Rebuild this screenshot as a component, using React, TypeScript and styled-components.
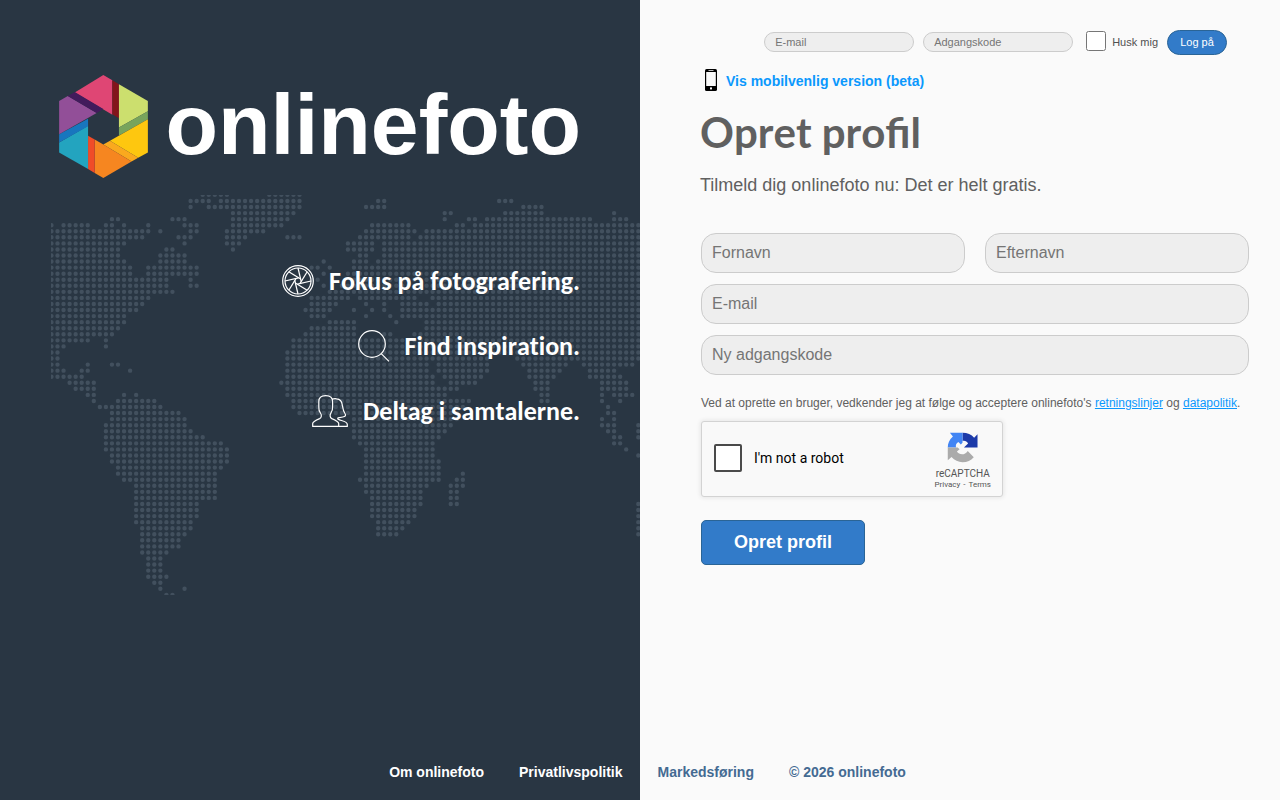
import React from "react";
import styled, { createGlobalStyle } from "styled-components";

const GlobalStyle = createGlobalStyle`
  *, *::before, *::after { box-sizing: border-box; }
  body {
    margin: 0;
    background: #fafafa;
    color: #606060;
    font-family: "Liberation Sans", Arial, sans-serif;
    font-size: 12px;
  }
`;

const Page = styled.div`
  display: flex;
  flex-direction: column;
  min-height: 100vh;
  background: linear-gradient(to right, #293643 50%, #fafafa 50%);
`;

const Columns = styled.main`
  display: grid;
  grid-template-columns: 1fr 1fr;
  flex: 1;
`;

const Intro = styled.section`
  position: relative;
  overflow: hidden;
  min-height: 600px;
  padding: 75px 60px 0 20px;
  display: flex;
  flex-direction: column;
  align-items: flex-end;
  color: #fff;
`;

const MapDrawing = styled.svg`
  position: absolute;
  top: 195px;
  right: 0;
  width: 589px;
  height: 400px;
`;

const Brand = styled.div`
  position: relative;
  display: flex;
  align-items: center;
  gap: 17px;
  height: 103px;
`;

const BrandName = styled.span`
  font-size: 86px;
  line-height: 100px;
  font-weight: 700;
  margin-right: -1px;
  padding-bottom: 6px;
`;

const Features = styled.ul`
  position: relative;
  list-style: none;
  margin: 87px 0 0;
  padding: 0;
  display: flex;
  flex-direction: column;
  align-items: flex-end;
  gap: 33px;
`;

const Feature = styled.li`
  display: flex;
  align-items: center;
  gap: 15px;
  height: 32px;
  font-family: Carlito, Lato, sans-serif;
  font-size: 26px;
  line-height: 32px;
  font-weight: 700;
  font-kerning: none;
  font-variant-ligatures: none;
  white-space: nowrap;
`;

const Signup = styled.section`
  padding: 30px 30px 0 60px;
`;

const LoginForm = styled.form`
  display: flex;
  align-items: center;
  justify-content: flex-end;
  height: 25px;
  padding-right: 23px;
  font-size: 11px;
`;

const LoginInput = styled.input`
  width: 150px;
  height: 20px;
  margin: 0 9px 2px 0;
  padding: 0 10px;
  border: 1px solid #ccc;
  border-radius: 10px;
  background: #eee;
  font: 11px "Liberation Sans", Arial, sans-serif;
  &::placeholder { color: #757575; opacity: 1; }
`;

const Remember = styled.label`
  display: flex;
  align-items: center;
  gap: 6px;
  margin: 0 9px 2px 4px;
  color: #505050;
`;

const RememberBox = styled.input`
  width: 20px;
  height: 20px;
  margin: 0 0 1px;
`;

const LoginButton = styled.button`
  width: 60px;
  height: 25px;
  padding: 0 0 2px;
  border: 1px solid #2a6496;
  border-radius: 13px;
  background: #327bc9;
  color: #fff;
  font: 11px "Liberation Sans", Arial, sans-serif;
`;

const MobileLink = styled.a`
  display: flex;
  align-items: center;
  width: fit-content;
  gap: 9px;
  margin: 14px 0 0 5px;
  color: #0b98fd;
  font-size: 14px;
  line-height: 22px;
  font-weight: 700;
  text-decoration: none;
  svg { margin-bottom: 2px; }
`;

const Title = styled.h1`
  margin: 12px 0 0;
  font-family: Lato, sans-serif;
  font-size: 42px;
  line-height: 54px;
  font-weight: 700;
  font-kerning: none;
`;

const Subtitle = styled.p`
  margin: 16px 0 0;
  font-size: 18px;
  line-height: 20px;
`;

const SignupForm = styled.form`
  display: grid;
  grid-template-columns: 1fr 1fr;
  gap: 11px 20px;
  margin: 38px 1px 0;
`;

const Field = styled.input<{ $wide?: boolean }>`
  grid-column: ${(p) => (p.$wide ? "1 / -1" : "auto")};
  min-width: 0;
  width: 100%;
  height: 40px;
  margin: 0;
  padding: 0 10px;
  border: 1px solid #ccc;
  border-radius: 15px;
  background: #eee;
  font: 16px "Liberation Sans", Arial, sans-serif;
  &::placeholder { color: #757575; opacity: 1; }
`;

const Terms = styled.p`
  grid-column: 1 / -1;
  margin: 10px -5px 0 0;
  line-height: 14px;
  a { color: #0b98fd; text-decoration: underline; }
`;

const Captcha = styled.div`
  grid-column: 1 / -1;
  display: flex;
  align-items: center;
  width: 302px;
  height: 76px;
  padding: 0 11px 0 12px;
  border: 1px solid #d3d3d3;
  border-radius: 3px;
  background: #f9f9f9;
  box-shadow: 0 0 4px 1px rgba(0, 0, 0, 0.08);
  font-family: Roboto, sans-serif;
`;

const CaptchaLabel = styled.label`
  display: flex;
  align-items: center;
  gap: 12px;
  flex: 1;
  padding-bottom: 2px;
  color: #000;
  font-size: 14px;
`;

const CaptchaBox = styled.input`
  appearance: none;
  width: 28px;
  height: 28px;
  margin: 0;
  border: 2px solid #4a4a4a;
  border-radius: 2px;
  background: #fff;
`;

const CaptchaBrand = styled.div`
  display: flex;
  flex-direction: column;
  align-items: center;
  padding-top: 3px;
  color: #555;
  font-size: 10px;
  line-height: 12px;
  svg { margin-bottom: 5px; }
`;

const CaptchaLinks = styled.span`
  display: flex;
  gap: 3px;
  font-size: 8px;
  line-height: 10px;
  a { color: #555; text-decoration: none; }
`;

const SubmitButton = styled.button`
  grid-column: 1 / -1;
  justify-self: start;
  width: 164px;
  height: 45px;
  margin-top: 12px;
  border: 1px solid #2a6496;
  border-radius: 5px;
  background: #327bc9;
  color: #fff;
  font: 700 18px "Liberation Sans", Arial, sans-serif;
`;

const Footer = styled.footer`
  display: flex;
  justify-content: center;
  gap: 35px;
  padding: 0 0 20px 15px;
  font-size: 14px;
  line-height: 16px;
  font-weight: 700;
`;

const FooterLink = styled.a<{ $light?: boolean }>`
  color: ${(p) => (p.$light ? "#fff" : "#446a92")};
  text-decoration: none;
`;

/* One line per latitude of the map; each pair is the first and last dotted column. */
const mapRows: number[][][] = [
  [[25, 29], [36, 41]],
  [[23, 26], [28, 41], [54, 55], [74, 76]],
  [[23, 23], [26, 41], [52, 55], [78, 81]],
  [[30, 40], [65, 66], [75, 81], [93, 93]],
  [[10, 11], [20, 22], [30, 39], [65, 65], [69, 70], [72, 89], [93, 95]],
  [[0, 0], [2, 6], [9, 10], [12, 12], [16, 16], [22, 24], [30, 38], [53, 59], [67, 68], [70, 97]],
  [[0, 16], [18, 18], [23, 24], [29, 35], [52, 60], [62, 97]],
  [[0, 15], [21, 23], [29, 32], [39, 41], [51, 59], [61, 97]],
  [[0, 12], [22, 22], [29, 31], [49, 53], [55, 97]],
  [[0, 11], [19, 20], [30, 30], [49, 53], [55, 97]],
  [[0, 11], [18, 22], [51, 52], [55, 97]],
  [[0, 12], [18, 22], [45, 45], [50, 52], [54, 97]],
  [[0, 13], [16, 24], [43, 44], [46, 46], [50, 97]],
  [[0, 13], [16, 24], [45, 45], [49, 97]],
  [[0, 19], [23, 23], [43, 44], [50, 97]],
  [[0, 19], [23, 24], [45, 45], [48, 97]],
  [[0, 20], [46, 97]],
  [[0, 16], [43, 49], [51, 60], [63, 97]],
  [[0, 15], [43, 47], [52, 52], [55, 55], [58, 62], [64, 97]],
  [[0, 14], [42, 46], [50, 50], [53, 53], [55, 55], [58, 97]],
  [[0, 12], [43, 45], [52, 52], [56, 56], [58, 97]],
  [[0, 12], [46, 50], [57, 57], [62, 97]],
  [[0, 11], [43, 50], [62, 97]],
  [[0, 10], [42, 50], [55, 56], [60, 97]],
  [[0, 6], [9, 9], [40, 97]],
  [[0, 2], [9, 9], [40, 97]],
  [[0, 1], [39, 97]],
  [[0, 1], [39, 72], [77, 97]],
  [[0, 1], [6, 6], [10, 11], [39, 62], [64, 72], [78, 85], [88, 96]],
  [[0, 2], [5, 6], [13, 13], [39, 62], [64, 72], [79, 84], [89, 93]],
  [[0, 5], [39, 63], [65, 71], [79, 83], [89, 94]],
  [[3, 7], [38, 63], [66, 70], [80, 82], [91, 95]],
  [[4, 7], [39, 67], [80, 82], [91, 95]],
  [[6, 7], [12, 12], [14, 14], [39, 65], [81, 82], [91, 91], [93, 96]],
  [[7, 7], [11, 17], [40, 69], [81, 82], [91, 91], [94, 94]],
  [[8, 18], [40, 68], [92, 92]],
  [[10, 21], [41, 67], [92, 93]],
  [[10, 22], [50, 67], [91, 91], [93, 93]],
  [[9, 22], [50, 66], [91, 93], [97, 97]],
  [[9, 23], [50, 65], [92, 93], [97, 97]],
  [[9, 25], [50, 64], [93, 94], [97, 97]],
  [[9, 28], [51, 63], [93, 94]],
  [[9, 29], [52, 63], [95, 95]],
  [[10, 29], [52, 63], [97, 97]],
  [[10, 29], [52, 64]],
  [[11, 28], [52, 64]],
  [[11, 27], [52, 64], [68, 68]],
  [[12, 27], [51, 64], [67, 68]],
  [[14, 27], [52, 62], [66, 68]],
  [[14, 27], [52, 61], [66, 67]],
  [[14, 27], [53, 61], [66, 67]],
  [[14, 24], [53, 61], [66, 67], [97, 97]],
  [[14, 24], [53, 60], [97, 97]],
  [[14, 24], [53, 60], [97, 97]],
  [[14, 23], [54, 59], [97, 97]],
  [[15, 23], [54, 58], [97, 97]],
  [[15, 22], [54, 57], [97, 97]],
  [[15, 21]],
  [[15, 21]],
  [[15, 19]],
  [[16, 18]],
  [[16, 18]],
  [[16, 18]],
  [[16, 19]],
  [[17, 18]],
  [[18, 18], [22, 22]],
  [[19, 20]],
];

const mapPath = mapRows
  .map((spans, row) =>
    spans
      .map(([first, last]) => {
        let d = "";
        for (let col = first; col <= last; col++) {
          d += `M${(col * 6.05 + 0.45).toFixed(2)} ${(row * 6.06 - 0.1).toFixed(2)}h0`;
        }
        return d;
      })
      .join("")
  )
  .join("");

const WorldMap = () => (
  <MapDrawing viewBox="0 0 589 400" aria-hidden="true">
    <path d={mapPath} stroke="#42505e" strokeWidth="4.4" strokeLinecap="round" fill="none" />
  </MapDrawing>
);

const Logo = () => (
  <svg width="89" height="103" viewBox="57 44 267 310" aria-hidden="true">
    <path fill="#df4674" d="M190 44 217 60V164L104 97Z" />
    <path fill="#82151b" d="M217 60 237 72V174L217 162Z" />
    <path fill="#ccdf6e" d="M237 72 324 122V153L237 202Z" />
    <path fill="#78a45c" d="M324 153V177L237 226V202Z" />
    <path fill="#fec70f" d="M324 177V277L295 293 210 242Z" />
    <path fill="#faa91e" d="M210 242 295 293 275 304 190 253Z" />
    <path fill="#f68620" d="M190 253 275 304 190 354 164 339V238Z" />
    <path fill="#f04c28" d="M144 227 164 238V339L144 327Z" />
    <path fill="#23a4bf" d="M57 247 144 197V327L57 277Z" />
    <path fill="#1876be" d="M57 222 144 176V198L57 247Z" />
    <path fill="#924f98" d="M57 122 83 107 170 158 57 222Z" />
    <path fill="#421b5c" d="M83 107 104 95 190 146 170 158Z" />
  </svg>
);

const ApertureIcon = () => (
  <svg width="32" height="32" viewBox="0 0 32 32" fill="none" stroke="#fff" strokeWidth="1.2" aria-hidden="true">
    <circle cx="16" cy="16" r="15.3" />
    <circle cx="16" cy="16" r="13" />
    {[0, 45, 90, 135, 180, 225, 270, 315].map((angle) => (
      <path key={angle} transform={`rotate(${angle} 16 16)`} d="M16 3 19.2 16.5" />
    ))}
  </svg>
);

const SearchIcon = () => (
  <svg width="32" height="32" viewBox="0 0 32 32" fill="none" stroke="#fff" strokeWidth="1.2" aria-hidden="true">
    <circle cx="14" cy="14" r="13.3" />
    <path d="M23.2 23.6 31 31.4" />
  </svg>
);

const PeopleIcon = () => (
  <svg width="36" height="32" viewBox="0 0 36 32" fill="none" stroke="#fff" strokeWidth="1.2" strokeLinejoin="round" aria-hidden="true">
    <path d="M.7 31.4V28.6C.7 26.8 3.4 25.4 7.6 23.6C9.7 22.6 9.7 20 8.7 18.5C7 16.2 6.6 14 6.8 12V6.6C6.8 2.6 9.6.7 13.7.7S20.6 2.6 20.6 6.6V12C20.8 14 20 16.4 18.8 18.3C17.8 20 17.7 22.5 19.8 23.6C24 25.4 26.7 26.8 26.7 28.6V31.4Z" />
    <path d="M20.2 4.3C21.6 3.6 23 3.5 24.6 3.8C28 4 29.8 6.3 30.2 9.6C30.8 13.5 31 15.8 33.2 19C34 20.4 33.5 21.5 30.8 22L26 22.8C25 24 26.5 24.8 29.5 25.5C33 26.4 35.3 28 35.3 29.5V31.4H26.7" />
  </svg>
);

const PhoneIcon = () => (
  <svg width="12" height="22" viewBox="0 0 12 22" aria-hidden="true">
    <rect width="12" height="22" rx="1.6" fill="#000" />
    <path fill="#fafafa" d="M1.2 3H10.8V17H1.2ZM3.5 1H8.5V1.8H3.5Z" />
    <rect x="5" y="18.4" width="2" height="2" fill="#fafafa" />
  </svg>
);

const RecaptchaIcon = () => (
  <svg width="31" height="31" viewBox="0 0 64 64" aria-hidden="true">
    <path fill="#1c3aa9" d="M63 32V4.6L56 12C50.5 5 42 1.6 32 1.6V18.5C37 17.5 41 19 43.5 23.5L35 32Z" />
    <path fill="#4285f4" d="M32 1.6H6L12.2 9.3C4.5 15.5 1.6 24 1.6 32H18.6C17.5 27 19 23 23.5 20.5L28.5 26L32 22Z" />
    <path fill="#ababab" d="M1.6 32V58.5L9.3 51.8C15.5 59 23.5 62.4 32 62.4C42 62.4 49 59 55.3 52L42.8 39.4C41.4 41.8 39.4 43.2 37.4 44.2C32 47.5 24 46 20.5 40.5L26 35.5L22 32Z" />
  </svg>
);

const stopSubmit = (event: React.FormEvent) => event.preventDefault();

export default function App() {
  return (
    <>
      <GlobalStyle />
      <Page>
        <Columns>
          <Intro>
            <WorldMap />
            <Brand>
              <Logo />
              <BrandName>onlinefoto</BrandName>
            </Brand>
            <Features>
              <Feature><ApertureIcon />Fokus på fotografering.</Feature>
              <Feature><SearchIcon />Find inspiration.</Feature>
              <Feature><PeopleIcon />Deltag i samtalerne.</Feature>
            </Features>
          </Intro>
          <Signup>
            <LoginForm onSubmit={stopSubmit}>
              <LoginInput type="email" placeholder="E-mail" aria-label="E-mail" />
              <LoginInput type="password" placeholder="Adgangskode" aria-label="Adgangskode" />
              <Remember>
                <RememberBox type="checkbox" />
                Husk mig
              </Remember>
              <LoginButton type="submit">Log på</LoginButton>
            </LoginForm>
            <MobileLink href="#mobil"><PhoneIcon />Vis mobilvenlig version (beta)</MobileLink>
            <Title>Opret profil</Title>
            <Subtitle>Tilmeld dig onlinefoto nu: Det er helt gratis.</Subtitle>
            <SignupForm onSubmit={stopSubmit}>
              <Field type="text" placeholder="Fornavn" aria-label="Fornavn" />
              <Field type="text" placeholder="Efternavn" aria-label="Efternavn" />
              <Field $wide type="email" placeholder="E-mail" aria-label="E-mail" />
              <Field $wide type="password" placeholder="Ny adgangskode" aria-label="Ny adgangskode" />
              <Terms>
                Ved at oprette en bruger, vedkender jeg at følge og acceptere onlinefoto's{" "}
                <a href="#retningslinjer">retningslinjer</a> og <a href="#datapolitik">datapolitik</a>.
              </Terms>
              <Captcha>
                <CaptchaLabel>
                  <CaptchaBox type="checkbox" />
                  I'm not a robot
                </CaptchaLabel>
                <CaptchaBrand>
                  <RecaptchaIcon />
                  reCAPTCHA
                  <CaptchaLinks>
                    <a href="#privacy">Privacy</a>
                    <span>-</span>
                    <a href="#terms">Terms</a>
                  </CaptchaLinks>
                </CaptchaBrand>
              </Captcha>
              <SubmitButton type="submit">Opret profil</SubmitButton>
            </SignupForm>
          </Signup>
        </Columns>
        <Footer>
          <FooterLink $light href="#om">Om onlinefoto</FooterLink>
          <FooterLink $light href="#privatliv">Privatlivspolitik</FooterLink>
          <FooterLink href="#marked">Markedsføring</FooterLink>
          <FooterLink href="#copyright">© 2026 onlinefoto</FooterLink>
        </Footer>
      </Page>
    </>
  );
}
